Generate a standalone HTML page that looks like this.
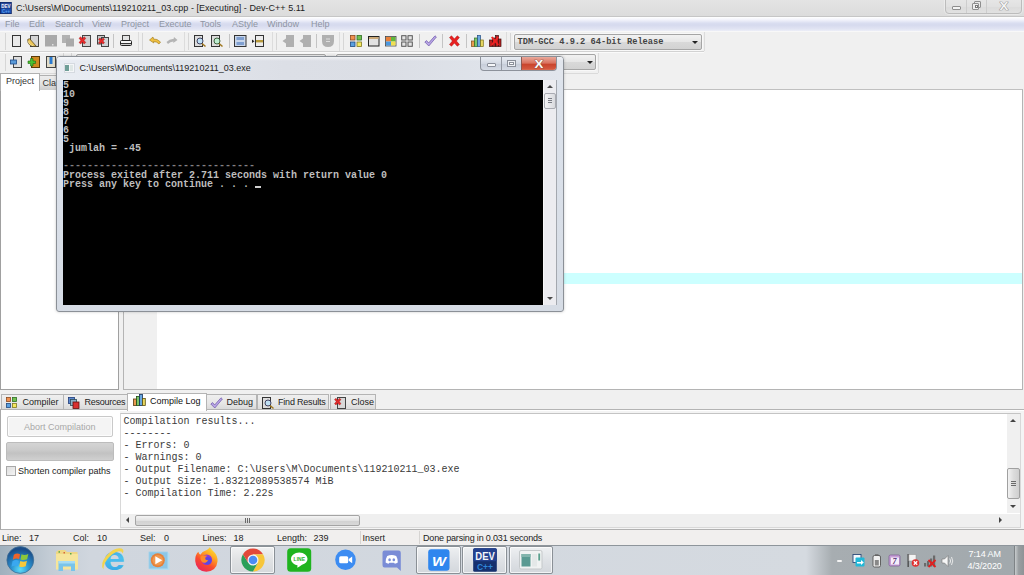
<!DOCTYPE html>
<html><head><meta charset="utf-8"><title>Dev-C++</title>
<style>
*{box-sizing:border-box;margin:0;padding:0}
html,body{width:1024px;height:575px;overflow:hidden;background:#f0f0f0}
body{position:relative;font-family:"Liberation Sans",sans-serif;font-size:9px;color:#1c1c1c}
.a{position:absolute}
.t{position:absolute;white-space:pre;line-height:11px}
#title{left:0;top:0;width:1024px;height:17px;background:linear-gradient(#e4e4e4,#dcdcdc);border-bottom:1px solid #c6c6c6}
#menu{left:0;top:17px;width:1024px;height:14px;background:linear-gradient(#ffffff 0%,#f2f3fb 20%,#d9ddf0 45%,#d6daee 58%,#e1e4f3 85%,#eceef7 100%)}
#menu span{position:absolute;top:2px;color:#8e95a3;line-height:11px}
#tools{left:0;top:31px;width:1024px;height:58px;background:#f0f0f0}
.mono{font-family:"Liberation Mono",monospace}
svg{position:absolute;overflow:visible}
.sep{position:absolute;width:1px;background:#c4c4c4}
.grip{position:absolute;width:1px;background:#d6d6d6}
.combo{position:absolute;border:1px solid #a5a5a5;border-radius:2px;background:linear-gradient(#f2f2f2,#e6e6e6 50%,#d9d9d9 51%,#d2d2d2);box-shadow:0 0 0 1px #f8f8f8}
.arr{position:absolute;border:3px solid transparent;border-bottom:none;border-top:3px solid #222}
</style></head><body>
<div id="title" class="a"></div>
<!-- app icon -->
<svg style="left:0;top:2px" width="12" height="12" viewBox="0 0 12 12"><rect x="0" y="0" width="11.800" height="12" fill="#10286a"/><rect x=".8" y=".8" width="10.200" height="5.500" fill="#2a4a9a"/><rect x=".8" y="6.500" width="10.200" height="4.700" fill="#1c4fb0"/><text x="1.300" y="5.600" font-family="Liberation Sans, sans-serif" font-size="5" font-weight="bold" fill="#f0f4fa" textLength="9.200" lengthAdjust="spacingAndGlyphs">DEV</text><text x="2" y="10.600" font-family="Liberation Sans, sans-serif" font-size="4.500" font-weight="bold" fill="#5aa0ea" textLength="8" lengthAdjust="spacingAndGlyphs">C++</text></svg>
<div class="t" style="left:16px;top:3px;font-size:9px;letter-spacing:.03px">C:\Users\M\Documents\119210211_03.cpp - [Executing] - Dev-C++ 5.11</div>
<!-- main window buttons -->
<div class="a" style="left:945px;top:-1px;width:77px;height:15px;border:1px solid #bcbcbc;border-radius:0 0 4px 4px;background:linear-gradient(#e6e6e6,#e1e1e1 50%,#dbdbdb 51%,#e1e1e1);overflow:hidden;box-shadow:0 0 0 1px rgba(255,255,255,.35)">
 <div class="a" style="left:20px;top:0;width:1px;height:15px;background:#cdcdcd"></div>
 <div class="a" style="left:40px;top:0;width:1px;height:15px;background:#cdcdcd"></div>
 <div class="a" style="left:6px;top:5.500px;width:9px;height:4px;border:1px solid #8e8e8e;border-radius:1px;background:#f4f4f4"></div>
 <div class="a" style="left:27.500px;top:1px;width:7px;height:7px;border:1px solid #8e8e8e;border-radius:1px;background:#e8e8e8"></div>
 <div class="a" style="left:26px;top:2.500px;width:7px;height:7px;border:1px solid #8e8e8e;border-radius:1px;background:#ededed"></div>
 <div class="a" style="left:28.500px;top:4.500px;width:3px;height:3.500px;border:1px solid #777;background:#fff"></div>
 <svg style="left:53px;top:1.500px" width="10" height="9" viewBox="0 0 10 9"><text x=".6" y="7.900" font-family="Liberation Sans, sans-serif" font-size="10" font-weight="bold" fill="#f4f4f4" stroke="#868686" stroke-width=".7" paint-order="stroke" textLength="8.800" lengthAdjust="spacingAndGlyphs">X</text></svg>
</div>
<div id="menu" class="a">
<span style="left:5px">File</span><span style="left:29px">Edit</span><span style="left:55px">Search</span><span style="left:92px">View</span><span style="left:121px">Project</span><span style="left:159px">Execute</span><span style="left:200px">Tools</span><span style="left:232px">AStyle</span><span style="left:267px">Window</span><span style="left:311px">Help</span>
</div>
<div id="tools" class="a"></div>

<svg style="left:12px;top:35px" width="12" height="12" viewBox="0 0 12 12"><rect x="0.5" y="0.5" width="8" height="11" fill="#e9e9e9" stroke="#333"/></svg>
<svg style="left:28px;top:35px" width="12" height="12" viewBox="0 0 12 12"><rect x="2.5" y="0.5" width="8" height="11" fill="#d5d5d5" stroke="#444"/><path d="M-.3 4.500 Q-.8 11.800 8.300 11.300 L1.600 3.700 Z" fill="#efc85a" stroke="#4a3a10" stroke-width=".7"/><path d="M.6 6 Q.8 10.300 5.500 10.700" fill="none" stroke="#fbe9a0" stroke-width=".8"/></svg>
<svg style="left:45px;top:35px" width="12" height="12" viewBox="0 0 12 12"><rect x="0" y="0" width="12" height="11.5" fill="#a9a9a9"/><rect x="7" y="9" width="1.5" height="1.5" fill="#e0e0e0"/></svg>
<svg style="left:62px;top:35px" width="12" height="12" viewBox="0 0 12 12"><rect x="0" y="0" width="8" height="8" fill="#b2b2b2"/><rect x="4" y="3.5" width="8" height="8" fill="#a9a9a9"/></svg>
<svg style="left:79px;top:35px" width="12" height="12" viewBox="0 0 12 12"><rect x="3.5" y="0.5" width="8" height="11" fill="#d0d0d0" stroke="#444"/><path d="M0 3.300 L1.700 1.800 L3.400 3.700 L5.100 1.800 L6.800 3.300 L5 5.400 L6.800 7.500 L5.100 9 L3.400 7.100 L1.700 9 L0 7.500 L1.800 5.400 Z" fill="#e62a2a" stroke="#a01010" stroke-width=".4"/></svg>
<svg style="left:97px;top:35px" width="12" height="12" viewBox="0 0 12 12"><rect x="0.5" y="0.5" width="7" height="8.5" fill="#c8c8c8" stroke="#444"/><rect x="4.5" y="2.5" width="7" height="9" fill="#cfd3d6" stroke="#444"/><path d="M1.500 4.200 L3 3 L4.500 4.600 L6 3 L7.500 4.200 L6 6 L7.500 7.800 L6 9 L4.500 7.400 L3 9 L1.500 7.800 L3 6 Z" fill="#e62a2a" stroke="#a01010" stroke-width=".4"/></svg>
<svg style="left:120px;top:35px" width="12" height="12" viewBox="0 0 12 12"><rect x="2.5" y="0.5" width="7" height="5" fill="#e4e4e4" stroke="#444"/><rect x="0.5" y="5.5" width="11" height="5" rx="1" fill="#f4f4f4" stroke="#222"/><rect x="1" y="8" width="10" height="1.2" fill="#333"/></svg>
<svg style="left:149px;top:35px" width="12" height="12" viewBox="0 0 12 12"><path d="M0.5 5 L4 2 L4.5 4 Q8 3.5 11.5 7 L10 9 Q8 6.5 4.6 6.5 L4.8 8 Z" fill="#f0c040" stroke="#9a7414" stroke-width=".6"/></svg>
<svg style="left:166px;top:35px" width="12" height="12" viewBox="0 0 12 12"><path d="M11.5 5 L8 2 L7.5 4 Q4 3.5 0.5 7 L2 9 Q4 6.5 7.4 6.5 L7.2 8 Z" fill="#b4b4b4"/></svg>
<svg style="left:194px;top:35px" width="12" height="12" viewBox="0 0 12 12"><rect x="0.5" y="0.5" width="8" height="11" fill="#dcdcdc" stroke="#333"/><circle cx="6" cy="6" r="3" fill="#bfe0f4" stroke="#335" stroke-width=".9"/><path d="M8 8.5 L11.5 11.5" stroke="#a07820" stroke-width="1.6"/></svg>
<svg style="left:211px;top:35px" width="12" height="12" viewBox="0 0 12 12"><rect x="0.5" y="0.5" width="8" height="11" fill="#dcdcdc" stroke="#333"/><circle cx="6" cy="6" r="3" fill="#bfeed0" stroke="#353" stroke-width=".9"/><path d="M8 8.5 L11.5 11.5" stroke="#a07820" stroke-width="1.6"/></svg>
<svg style="left:234px;top:35px" width="12" height="12" viewBox="0 0 12 12"><rect x="0.5" y="0.5" width="11.5" height="11" fill="#c9d6ea" stroke="#333"/><rect x="2.5" y="2" width="7.5" height="3" fill="#7f9fd0"/><rect x="2.5" y="7" width="7.5" height="3" fill="#7f9fd0"/></svg>
<svg style="left:252px;top:35px" width="12" height="12" viewBox="0 0 12 12"><rect x="3.5" y="0.5" width="8" height="11" fill="#ececec" stroke="#333"/><rect x="4" y="5" width="7" height="2.4" fill="#b89a3a"/><path d="M0 4.5 L2.5 6.2 L0 8 Z" fill="#222"/></svg>
<svg style="left:282px;top:35px" width="12" height="12" viewBox="0 0 12 12"><path d="M4 0 H12 V12 H4 V8.5 L0.5 6 L4 3.5 Z" fill="#b0b0b0"/></svg>
<svg style="left:299px;top:35px" width="12" height="12" viewBox="0 0 12 12"><path d="M4 0 H12 V12 H4 V8.5 L0.5 6 L4 3.5 Z" fill="#b0b0b0"/></svg>
<svg style="left:322px;top:35px" width="12" height="12" viewBox="0 0 12 12"><path d="M0 0 H12 V6 Q12 12 6 12 Q0 12 0 6 Z" fill="#b0b0b0"/><rect x="4" y="3.5" width="4" height="1" fill="#ddd"/><rect x="4" y="6" width="4" height="1" fill="#ddd"/></svg>
<svg style="left:350px;top:35px" width="12" height="12" viewBox="0 0 12 12"><rect x=".5" y=".5" width="4.5" height="4.5" fill="#f09050" stroke="#8a4a20" stroke-width=".8"/><rect x="7" y=".5" width="4.5" height="4.5" fill="#6fc050" stroke="#2e6e22" stroke-width=".8"/><rect x=".5" y="7" width="4.5" height="4.5" fill="#5aa0e0" stroke="#204a80" stroke-width=".8"/><rect x="7" y="7" width="4.5" height="4.5" fill="#f4e860" stroke="#807820" stroke-width=".8"/></svg>
<svg style="left:368px;top:35px" width="12" height="12" viewBox="0 0 12 12"><rect x=".5" y="1.5" width="10.5" height="9.5" fill="#e2e2e2" stroke="#222" stroke-width="1"/><rect x="1" y="2" width="9.5" height="2" fill="#caa878"/></svg>
<svg style="left:385px;top:35px" width="12" height="12" viewBox="0 0 12 12"><rect x=".5" y="1.5" width="10.5" height="9.5" fill="#e2e2e2" stroke="#444" stroke-width=".8"/><rect x="1" y="2" width="5" height="4.5" fill="#e8803a"/><rect x="6" y="2" width="4.5" height="4.5" fill="#62b83a"/><rect x="1" y="6.5" width="5" height="4" fill="#4a98e0"/><rect x="6" y="6.5" width="4.5" height="4" fill="#f0e050"/></svg>
<svg style="left:401px;top:35px" width="12" height="12" viewBox="0 0 12 12"><rect x=".7" y=".7" width="4.3" height="4.3" fill="#e4e4e4" stroke="#555" stroke-width="1"/><rect x="7" y=".7" width="4.3" height="4.3" fill="#e4e4e4" stroke="#555" stroke-width="1"/><rect x=".7" y="7" width="4.3" height="4.3" fill="#e4e4e4" stroke="#555" stroke-width="1"/><rect x="7" y="7" width="4.3" height="4.3" fill="#e4e4e4" stroke="#555" stroke-width="1"/></svg>
<svg style="left:424px;top:35px" width="12" height="12" viewBox="0 0 12 12"><path d="M0.8 7 L2.6 5.6 L4.6 8 L11 0.8 L12.4 2 L4.8 11 Z" fill="#b9a6e6" stroke="#6a55a8" stroke-width=".7"/></svg>
<svg style="left:449px;top:35px" width="12" height="12" viewBox="0 0 12 12"><path d="M0.5 2.5 L2.5 0.8 L5.4 4 L8.3 0.8 L10.4 2.5 L7.4 6 L10.4 9.5 L8.3 11.2 L5.4 8 L2.5 11.2 L0.5 9.5 L3.4 6 Z" fill="#e82020" stroke="#a80f0f" stroke-width=".5"/></svg>
<svg style="left:471px;top:35px" width="12" height="12" viewBox="0 0 12 12"><rect x=".5" y="6" width="3" height="5.5" fill="#e89a50" stroke="#7a4a18" stroke-width=".7"/><rect x="3.5" y="3" width="3" height="8.5" fill="#7ac46a" stroke="#2e6e22" stroke-width=".7"/><rect x="6.5" y=".5" width="3" height="11" fill="#6aa8e0" stroke="#224a80" stroke-width=".7"/><rect x="9.5" y="5" width="2.8" height="6.5" fill="#e8d860" stroke="#7a7018" stroke-width=".7"/></svg>
<svg style="left:489px;top:35px" width="12" height="12" viewBox="0 0 12 12"><rect x=".5" y="5" width="3" height="6.5" fill="#c02020" stroke="#3a1010" stroke-width=".7"/><rect x="3.5" y="3" width="3" height="8.5" fill="#a82020" stroke="#3a1010" stroke-width=".7"/><rect x="6.5" y=".5" width="3" height="11" fill="#b02020" stroke="#3a1010" stroke-width=".7"/><rect x="9.5" y="4" width="2.5" height="7.5" fill="#c02020" stroke="#3a1010" stroke-width=".7"/><path d="M2 2.5 L3.5 1.5 L6 4.5 L8.5 1.5 L10 2.5 L7.4 6 L10 9.5 L8.5 10.5 L6 7.5 L3.5 10.5 L2 9.500 L4.600 6 Z" fill="#ee2222"/></svg>
<div class="sep" style="left:113px;top:34px;height:14px"></div>
<div class="sep" style="left:229px;top:34px;height:14px"></div>
<div class="sep" style="left:316px;top:34px;height:14px"></div>
<div class="sep" style="left:418.5px;top:34px;height:14px"></div>
<div class="sep" style="left:442px;top:34px;height:14px"></div>
<div class="sep" style="left:465.5px;top:34px;height:14px"></div>
<div class="grip" style="left:4.5px;top:33px;height:17px"></div>
<div class="grip" style="left:142px;top:33px;height:17px"></div>
<div class="grip" style="left:187.5px;top:33px;height:17px"></div>
<div class="grip" style="left:275.5px;top:33px;height:17px"></div>
<div class="grip" style="left:343px;top:33px;height:17px"></div>
<div class="grip" style="left:509.5px;top:33px;height:17px"></div>
<div class="a" style="left:137.5px;top:32px;width:1px;height:19px;background:#dcdcdc"></div>
<div class="a" style="left:183.5px;top:32px;width:1px;height:19px;background:#dcdcdc"></div>
<div class="a" style="left:271.5px;top:32px;width:1px;height:19px;background:#dcdcdc"></div>
<div class="a" style="left:339px;top:32px;width:1px;height:19px;background:#dcdcdc"></div>
<div class="a" style="left:505.5px;top:32px;width:1px;height:19px;background:#dcdcdc"></div>
<div class="a" style="left:703.5px;top:32px;width:1px;height:19px;background:#dcdcdc"></div>
<div class="a" style="left:0;top:51px;width:704px;height:1px;background:#d2d2d2"></div>
<div class="a" style="left:0;top:52px;width:704px;height:1px;background:#fafafa"></div>
<div class="a" style="left:0;top:31px;width:1024px;height:1px;background:#f8f8f8"></div>
<div class="combo" style="left:514px;top:34px;width:188px;height:16px"></div>
<div class="t mono" style="left:517.5px;top:36.5px;font-size:8.7px;font-weight:bold;color:#444;line-height:11px">TDM-GCC 4.9.2 64-bit Release</div>
<div class="arr" style="left:692px;top:41px"></div>
<div class="combo" style="left:76px;top:54px;width:250px;height:16px"></div>
<div class="combo" style="left:336px;top:54px;width:260px;height:16px"></div>
<div class="arr" style="left:587px;top:60.500px"></div>
<div class="a" style="left:597.500px;top:53px;width:1px;height:20px;background:#dcdcdc"></div>
<div class="a" style="left:0;top:73px;width:598px;height:1px;background:#dadada"></div>
<svg style="left:10px;top:56px" width="12" height="12" viewBox="0 0 12 12"><rect x="3.5" y=".5" width="8" height="11" fill="#dedede" stroke="#444"/><rect x=".5" y="4" width="6" height="4" fill="#5a9ad8" stroke="#1e4a88" stroke-width=".8"/></svg>
<svg style="left:28px;top:56px" width="12" height="12" viewBox="0 0 12 12"><rect x="3.5" y=".5" width="8" height="11" fill="#d08a20" stroke="#5a3a08"/><path d="M0 5 H2.5 V2.500 H5 V5 H7.500 V7.500 H5 V10 H2.500 V7.500 H0 Z" fill="#4ac030" stroke="#1e6a10" stroke-width=".6"/></svg>
<svg style="left:46px;top:56px" width="12" height="12" viewBox="0 0 12 12"><rect x=".5" y=".5" width="9" height="11" fill="#e2dcc8" stroke="#444"/><rect x="3.5" y="1" width="3" height="7" fill="#2a7ad0"/></svg>
<div class="grip" style="left:4.5px;top:54px;height:17px"></div>
<div class="grip" style="left:63px;top:53px;height:4px"></div>
<div class="grip" style="left:71px;top:53px;height:4px"></div>

<!-- left panel -->
<div class="a" style="left:0;top:89px;width:119px;height:301px;background:#fff;border:1px solid #a0a0a0;border-top-color:#c8c8c8"></div>
<div class="a" style="left:0;top:73px;width:39.500px;height:18px;background:#fff;border:1px solid #b0b0b0;border-bottom:none"></div>
<div class="t" style="left:6px;top:76px;color:#333">Project</div>
<div class="a" style="left:39.500px;top:75px;width:30px;height:15px;background:linear-gradient(#ececec,#e2e2e2 55%,#cdcdcd);border:1px solid #b0b0b0;border-bottom:none;border-left:none"></div>
<div class="t" style="left:42.500px;top:78px;color:#333">Cla</div>

<!-- editor -->
<div class="a" style="left:123px;top:89.400px;width:899.500px;height:300.800px;background:#fff;border:1px solid #b4b4b4;border-top:1.300px solid #c0c0c0"></div>
<div class="a" style="left:124px;top:90px;width:33px;height:299px;background:#f0f0f0"></div>
<div class="a" style="left:157px;top:272.600px;width:865px;height:11.200px;background:#ccffff"></div>


<!-- console window -->
<div class="a" id="con" style="left:56px;top:56px;width:508px;height:256px;border:1px solid #8b9097;border-radius:4px 4px 3px 3px;background:linear-gradient(#eef1f6 0,#e4e9f0 10px,#dde3ec 24px,#d6dce5 100%);box-shadow:0 0 3px rgba(0,0,0,.22)"></div>
<div class="a" style="left:57px;top:57px;width:506px;height:23px;border-radius:3px 3px 0 0;background:linear-gradient(90deg,#e9edf3 0,#e2e6ed 20%,#dcdfe6 45%,#dbdee5 65%,#dfe3ea 85%,#e2e6ed 100%)"></div>
<div class="a" style="left:57px;top:57px;width:506px;height:4px;border-radius:3px 3px 0 0;background:linear-gradient(rgba(255,255,255,.6),rgba(255,255,255,0))"></div>
<div class="a" style="left:63px;top:80px;width:494px;height:225px;background:#000"></div>
<div class="a" style="left:543px;top:80px;width:14px;height:225px;background:#ececf0;border-left:1px solid #f8f8f8;border-right:1px solid #a4a8af"></div>
<div class="a" style="left:544px;top:93px;width:12px;height:16px;border:1px solid #a9abb2;border-radius:2px;background:linear-gradient(90deg,#f4f4f6,#d9dade)"></div>
<div class="a" style="left:548px;top:98px;width:4px;height:1px;background:#7a7d85;box-shadow:0 2px 0 #7a7d85,0 4px 0 #7a7d85"></div>
<div class="a" style="left:547px;top:85px;border:3px solid transparent;border-top:none;border-bottom:3px solid #4a4a4a"></div>
<div class="a" style="left:547px;top:297px;border:3px solid transparent;border-bottom:none;border-top:3px solid #4a4a4a"></div>
<!-- console icon + title -->
<div class="a" style="left:64px;top:63px;width:11px;height:10px;background:#f4f6f8;border:1px solid #d5dae0"></div>
<div class="a" style="left:65px;top:65px;width:4px;height:6px;background:#6f9e97"></div>
<div class="a" style="left:70px;top:65px;width:3px;height:6px;background:#dfe7e6"></div>
<div class="t" style="left:79.5px;top:62.5px;font-size:9px">C:\Users\M\Documents\119210211_03.exe</div>
<!-- console buttons -->
<div class="a" style="left:480px;top:57px;width:77px;height:14px;border:1px solid #8d929b;border-top:none;border-radius:0 0 4px 4px;background:linear-gradient(#e9edf3,#d3d9e3 50%,#c5ccd8 51%,#d5dbe5);overflow:hidden">
 <div class="a" style="left:20px;top:0;width:1px;height:14px;background:#9499a3"></div>
 <div class="a" style="left:40px;top:0;width:36px;height:14px;background:linear-gradient(#e9a99b,#d9705c 45%,#c8432b 50%,#d4583f 85%,#e08a6e);border-left:1px solid #8d5a52"></div>
 <div class="a" style="left:6px;top:6px;width:9px;height:4px;border:1px solid #8a8f99;border-radius:1px;background:#f6f7f9"></div>
 <div class="a" style="left:26px;top:3px;width:9px;height:7px;border:1px solid #8a8f99;background:#eef0f4"></div>
 <div class="a" style="left:28px;top:5px;width:5px;height:3px;border:1px solid #8a8f99;background:#fff"></div>
 <svg style="left:53px;top:2.500px" width="10" height="9" viewBox="0 0 10 9"><text x=".6" y="7.900" font-family="Liberation Sans, sans-serif" font-size="10" font-weight="bold" fill="#fbfbfb" stroke="#8a4a40" stroke-width=".7" paint-order="stroke" textLength="8.800" lengthAdjust="spacingAndGlyphs">X</text></svg>
</div>
<!-- console text -->
<pre class="a mono" style="left:63px;top:80.500px;font-size:10px;line-height:9px;color:#bebebe;font-weight:bold">5
10
9
8
7
6
5
 jumlah = -45

<span style="color:#808080;position:relative;top:-1px">--------------------------------</span>
Process exited after 2.711 seconds with return value 0
Press any key to continue . . . <span style="display:inline-block;width:6px;height:2px;background:#d0d0d0;vertical-align:-1px"></span></pre>


<!-- bottom panel -->
<div class="a" style="left:0;top:409.400px;width:1024px;height:120.600px;background:#fff;border-top:1px solid #b4b4b4;border-bottom:1px solid #b0b0b0;border-left:1px solid #a8a8a8"></div>
<div class="a" style="left:120px;top:411px;width:904px;height:118px;background:#f4f4f4"></div>
<div class="a" style="left:120px;top:413px;width:901px;height:115px;background:#fff;border:1px solid #d8d8d8;border-top-color:#c4c4c4"></div>
<!-- tabs -->
<div class="a" style="left:1px;top:394.400px;width:63px;height:15px;background:linear-gradient(#efefef,#e6e6e6 60%,#dadada);border:1px solid #b4b4b4;border-bottom:none"></div>
<div class="a" style="left:64px;top:394.400px;width:64px;height:15px;background:linear-gradient(#efefef,#e6e6e6 60%,#dadada);border:1px solid #b4b4b4;border-bottom:none;border-left:none"></div>
<div class="a" style="left:127px;top:393px;width:80px;height:18px;background:#fff;border:1px solid #b4b4b4;border-bottom:none"></div>
<div class="a" style="left:207px;top:394.400px;width:50px;height:15px;background:linear-gradient(#efefef,#e6e6e6 60%,#dadada);border:1px solid #b4b4b4;border-bottom:none;border-left:none"></div>
<div class="a" style="left:257px;top:394.400px;width:72px;height:15px;background:linear-gradient(#efefef,#e6e6e6 60%,#dadada);border:1px solid #b4b4b4;border-bottom:none"></div>
<div class="a" style="left:330px;top:394.400px;width:46px;height:15px;background:linear-gradient(#efefef,#e6e6e6 60%,#dadada);border:1px solid #b4b4b4;border-bottom:none"></div>
<div class="t" style="left:22.5px;top:397px;color:#222">Compiler</div>
<div class="t" style="left:84.5px;top:397px;color:#222;letter-spacing:-.25px">Resources</div>
<div class="t" style="left:150px;top:396px;color:#111">Compile Log</div>
<div class="t" style="left:226.5px;top:397px;color:#222">Debug</div>
<div class="t" style="left:278px;top:397px;color:#222;letter-spacing:-.2px">Find Results</div>
<div class="t" style="left:351px;top:397px;color:#222">Close</div>

<svg style="left:5.5px;top:397px" width="11" height="11" viewBox="0 0 11 11"><rect x=".5" y=".5" width="4" height="4" fill="#f09050" stroke="#8a4a20" stroke-width=".8"/><rect x="6.5" y=".5" width="4" height="4" fill="#6fc050" stroke="#2e6e22" stroke-width=".8"/><rect x=".5" y="6.500" width="4" height="4" fill="#5aa0e0" stroke="#204a80" stroke-width=".8"/><rect x="6.500" y="6.500" width="4" height="4" fill="#f4e860" stroke="#807820" stroke-width=".8"/></svg>
<svg style="left:68px;top:396.5px" width="12" height="12" viewBox="0 0 12 12"><rect x=".5" y=".5" width="6" height="6" fill="#5a8ad0" stroke="#1e3a78" stroke-width=".8"/><rect x="2.5" y="2.500" width="6" height="6" fill="#8ab0c8" stroke="#2e4a58" stroke-width=".8"/><rect x="5" y="5" width="6" height="6.500" fill="#d83030" stroke="#601010" stroke-width=".8"/></svg>
<svg style="left:133px;top:394px" width="13" height="12" viewBox="0 0 13 12"><rect x=".5" y="5" width="3" height="6.5" fill="#e89a50" stroke="#5a3a10" stroke-width=".8"/><rect x="3.5" y="2.500" width="3" height="9" fill="#7ac46a" stroke="#1e4e12" stroke-width=".8"/><rect x="6.500" y=".5" width="3" height="11" fill="#6aa8e0" stroke="#12305a" stroke-width=".8"/><rect x="9.500" y="4.500" width="2.800" height="7" fill="#e8d860" stroke="#5a5010" stroke-width=".8"/></svg>
<svg style="left:210px;top:397px" width="13" height="12" viewBox="0 0 13 12"><path d="M0.8 7 L2.6 5.6 L4.6 8 L11 0.8 L12.4 2 L4.8 11 Z" fill="#b9a6e6" stroke="#6a55a8" stroke-width=".7"/></svg>
<svg style="left:261.5px;top:396.5px" width="12" height="12" viewBox="0 0 12 12"><rect x="0.5" y="0.5" width="8" height="11" fill="#dcdcdc" stroke="#333"/><circle cx="6" cy="6" r="3" fill="#bfe0f4" stroke="#335" stroke-width=".9"/><path d="M8 8.5 L11.5 11.5" stroke="#a07820" stroke-width="1.6"/></svg>
<svg style="left:334px;top:396.5px" width="12" height="12" viewBox="0 0 12 12"><rect x="3.5" y="0.5" width="8" height="11" fill="#d8d8d8" stroke="#444"/><path d="M0.5 2.5 L2 1.3 L3.700 3.200 L5.400 1.300 L7 2.500 L5.300 4.600 L7 6.700 L5.400 8 L3.700 6 L2 8 L0.500 6.700 L2.200 4.600 Z" fill="#e02a2a" stroke="#a01010" stroke-width=".4"/></svg>

<!-- abort button etc -->
<div class="a" style="left:7px;top:416px;width:106px;height:21px;border:1px solid #c9c9c9;border-radius:2px;background:#f4f4f4;box-shadow:inset 0 0 0 1px #fcfcfc"></div>
<div class="t" style="left:24px;top:421.5px;color:#a8a8a8">Abort Compilation</div>
<div class="a" style="left:6px;top:442px;width:108px;height:19px;border:1px solid #bcbcbc;border-radius:2px;background:linear-gradient(#d4d4d4,#cbcbcb 40%,#c2c2c2 60%,#d0d0d0)"></div>
<div class="a" style="left:6px;top:466px;width:10px;height:10px;border:1px solid #a8a8a8;background:linear-gradient(135deg,#dedede,#f4f4f4)"></div>
<div class="t" style="left:18px;top:466px;color:#222">Shorten compiler paths</div>
<!-- log text -->
<pre class="a mono" style="left:123.5px;top:416.1px;font-size:10px;line-height:12px;color:#3a3a3a">Compilation results...
--------
- Errors: 0
- Warnings: 0
- Output Filename: C:\Users\M\Documents\119210211_03.exe
- Output Size: 1.83212089538574 MiB
- Compilation Time: 2.22s</pre>
<!-- log scrollbars -->
<div class="a" style="left:1006.5px;top:414px;width:13.500px;height:99px;background:#f0f0f0"></div>
<div class="a" style="left:121px;top:513.5px;width:899px;height:13.500px;background:#efefef"></div>
<div class="a" style="left:1007px;top:468px;width:12.5px;height:31px;border:1px solid #a0a0a0;border-radius:2px;background:linear-gradient(90deg,#f2f2f2,#dcdcdc 50%,#cfcfcf)"></div>
<div class="a" style="left:1011px;top:480.5px;width:5px;height:1px;background:#6a6a6a;box-shadow:0 2px 0 #6a6a6a,0 4px 0 #6a6a6a"></div>
<div class="a" style="left:1010px;top:419px;border:3px solid transparent;border-top:none;border-bottom:3px solid #444"></div>
<div class="a" style="left:1010px;top:505px;border:3px solid transparent;border-bottom:none;border-top:3px solid #444"></div>
<div class="a" style="left:999px;top:516.5px;border:3.500px solid transparent;border-right:none;border-left:3.500px solid #444"></div>
<div class="a" style="left:125.500px;top:516.500px;border:3.500px solid transparent;border-left:none;border-right:3.500px solid #444"></div>
<div class="a" style="left:135px;top:514.5px;width:225px;height:11.500px;border:1px solid #a4a4a4;border-radius:2px;background:linear-gradient(#f4f4f4,#e2e2e2 50%,#d2d2d2 55%,#d8d8d8)"></div>
<div class="a" style="left:245px;top:518px;width:1px;height:5px;background:#6a6a6a;box-shadow:2px 0 0 #6a6a6a,4px 0 0 #6a6a6a"></div>

<!-- status bar -->
<div class="a" style="left:0;top:530px;width:1024px;height:15px;background:#f1efee"></div>
<div class="t" style="left:2px;top:532.5px">Line:</div><div class="t" style="left:29px;top:532.5px">17</div>
<div class="t" style="left:73px;top:532.5px">Col:</div><div class="t" style="left:97px;top:532.5px">10</div>
<div class="t" style="left:140px;top:532.5px">Sel:</div><div class="t" style="left:164px;top:532.5px">0</div>
<div class="t" style="left:202.500px;top:532.5px">Lines:</div><div class="t" style="left:233.500px;top:532.5px">18</div>
<div class="t" style="left:277px;top:532.5px">Length:</div><div class="t" style="left:313.500px;top:532.5px">239</div>
<div class="t" style="left:362.500px;top:532.5px">Insert</div>
<div class="t" style="left:423px;top:532.5px;letter-spacing:-.17px">Done parsing in 0.031 seconds</div>
<div class="a" style="left:359.500px;top:531px;width:1px;height:13px;background:#d6d4d2"></div>
<div class="a" style="left:418.500px;top:531px;width:1px;height:13px;background:#d6d4d2"></div>

<!-- taskbar -->
<div class="a" id="taskbar" style="left:0;top:545px;width:1024px;height:30px;background:linear-gradient(90deg,#9fb0bd 0,#c3ccd5 50px,#d0d6de 90px,#d5dae0 806px,#a7adb1 832px,#a2a9ad 1010px);border-top:1px solid #8e959b"></div>

<svg style="left:6px;top:546px" width="29" height="29" viewBox="0 0 29 29"><defs><radialGradient id="orb" cx="50%" cy="85%" r="75%"><stop offset="0" stop-color="#5cdcf8"/><stop offset=".45" stop-color="#2a92d0"/><stop offset="1" stop-color="#1a4c88"/></radialGradient></defs><circle cx="14.3" cy="14" r="13.4" fill="url(#orb)" stroke="#3f6e96" stroke-width=".8"/><g transform="translate(14.300 14.300) scale(1.180) translate(-14 -14.200)"><path d="M8.5 9.5 Q11 7.500 13.800 9 L13 13.300 Q10.500 12 7.700 13.800 Z" fill="#f0642a"/><path d="M15 9 Q17.500 10.300 20.800 8.800 L19.800 13.300 Q17 14.600 14.200 13.500 Z" fill="#8cc63a"/><path d="M7.400 15 Q10 13.300 12.800 14.600 L12 19.300 Q9.500 18 6.500 19.600 Z" fill="#3aa8f0"/><path d="M14 14.800 Q16.800 16 19.600 14.600 L18.600 19.300 Q16 20.600 13.100 19.400 Z" fill="#f8c83a"/></g></svg>
<svg style="left:55px;top:549px" width="24" height="23" viewBox="0 0 24 23"><path d="M1 3 L3.500 1 H10 L12 3 H22.500 V20 H1 Z" fill="#efd784"/><rect x="1" y="5" width="22" height="15.500" fill="#f6e59a"/><rect x="3.5" y="2.200" width="1.500" height="1.500" fill="#5aa84a"/><rect x="8.500" y="3" width="1.500" height="1.500" fill="#d86a3a"/><rect x="15" y="4" width="1.500" height="1.500" fill="#5aa84a"/><path d="M3.500 12 H20 V22 H16 V17.500 H8 V22 H3.500 Z" fill="#79c4ea"/><path d="M3.500 12 H20 V14.500 H3.500 Z" fill="#a6dcf4"/></svg>
<svg style="left:100px;top:546px" width="27" height="27" viewBox="0 0 27 27"><defs><linearGradient id="ieg" x1="0" y1="0" x2="0" y2="1"><stop offset="0" stop-color="#2f8fd8"/><stop offset=".5" stop-color="#4cc0f0"/><stop offset="1" stop-color="#2f9fe0"/></linearGradient></defs><text x="3" y="23.500" font-family="Liberation Sans, sans-serif" font-size="33" font-weight="bold" fill="url(#ieg)" textLength="22" lengthAdjust="spacingAndGlyphs">e</text><path d="M3.500 23.500 Q-.5 18 6.500 9.500 Q14.500 1 21.500 2.500 Q24.500 3.500 22.800 7.500 Q22 4.800 18.500 5.300 Q12 7 6.800 14 Q3 19.500 3.500 23.500 Z" fill="#f2d44e"/></svg>
<svg style="left:148px;top:551px" width="23" height="20" viewBox="0 0 23 20"><path d="M1 1 H19.500 L21.500 2.500 V19 H3 L1 17.500 Z" fill="#b4dcf0"/><rect x="1" y="1" width="18.500" height="16.500" fill="#8cc6e6" stroke="#9fd2ec" stroke-width=".8"/><circle cx="9.800" cy="9.300" r="7" fill="#e5813a"/><circle cx="9.800" cy="9.300" r="5.300" fill="#f09a50"/><path d="M7.300 5.300 L14.300 9.300 L7.300 13.300 Z" fill="#fff"/></svg>
<svg style="left:194px;top:547px" width="25" height="26" viewBox="0 0 25 26"><defs><linearGradient id="ffg" x1="0.85" y1="0" x2="0.25" y2="1"><stop offset="0" stop-color="#ffe43a"/><stop offset=".3" stop-color="#ffae22"/><stop offset=".65" stop-color="#fa4a2c"/><stop offset="1" stop-color="#e8245e"/></linearGradient></defs><path d="M12.300 3.200 Q14.500 2.200 15.800 .3 Q17.800 3 20.300 5.200 Q24 9 23.500 14.500 Q22.500 24 12.300 24.800 Q2 24 1.200 14 Q1 8 4.300 4.800 Q4.800 6.800 6.300 7.800 Q8 4.500 12.300 3.200 Z" fill="url(#ffg)"/><circle cx="12.800" cy="12.800" r="5.300" fill="#8a3ad8"/><circle cx="13.800" cy="13.800" r="3.600" fill="#5a48e0"/><path d="M6.500 9.500 Q9.500 7.800 13.500 8.800 Q10.800 9.800 11.200 12 Q12 13.600 14.200 13 Q13 16 9.500 15.800 Q6 14.500 6.500 9.500 Z" fill="#ff8a28"/></svg>
<div class="a" style="left:230px;top:546px;width:44.500px;height:28px;border:1px solid #8a9096;border-radius:2px;background:linear-gradient(#f0f1f2,#e0e2e4 50%,#d6d9dc);box-shadow:inset 0 0 0 1px rgba(255,255,255,.7)"></div>
<svg style="left:240.500px;top:548px" width="24" height="24" viewBox="0 0 24 24"><path d="M12 12 L1.950 6.200 A11.600 11.600 0 0 1 22.050 6.200 L12 6.400 Z" fill="#e2493a"/><path d="M12 12 L22.050 6.200 A11.600 11.600 0 0 1 12 23.600 L16.800 14.800 Z" fill="#f7c63a"/><path d="M12 6.400 L22.050 6.200 L17 12 Z" fill="#f7c63a"/><path d="M12 12 L12 23.600 A11.600 11.600 0 0 1 1.950 6.200 L7.200 14.800 Z" fill="#2ba05a"/><path d="M12 23.600 L16.800 14.800 L12 17.600 L7.200 14.800 Z" fill="#2ba05a"/><path d="M1.950 6.200 L7.200 14.800 L7 9 L12 6.400 Z" fill="#e2493a"/><circle cx="12" cy="12" r="5.500" fill="#f4f4f4"/><circle cx="12" cy="12" r="4.300" fill="#4a8cf4"/></svg>
<svg style="left:287px;top:548px" width="25" height="24" viewBox="0 0 25 24"><rect x=".2" y=".2" width="24" height="23.500" rx="3.500" fill="#1fb41f"/><path d="M12.300 4.500 C7.500 4.500 4 7.500 4 11 C4 14 6.800 16.600 10.500 17.200 L10.300 19.800 Q12.500 19 15 16.800 C18.500 15.800 20.500 13.600 20.500 11 C20.500 7.500 17 4.500 12.300 4.500 Z" fill="#fff"/><text x="6.600" y="12.900" font-family="Liberation Sans, sans-serif" font-size="5.200" font-weight="bold" fill="#1fb41f" textLength="11.400" lengthAdjust="spacingAndGlyphs">LINE</text></svg>
<svg style="left:335px;top:549px" width="22" height="22" viewBox="0 0 22 22"><circle cx="10.500" cy="10.800" r="10.300" fill="#3c8cf2"/><rect x="4.200" y="7.300" width="9" height="7" rx="1.500" fill="#fff"/><path d="M13.700 10 L17.200 7.500 V14.200 L13.700 11.800 Z" fill="#fff"/></svg>
<svg style="left:382px;top:550px" width="20" height="22" viewBox="0 0 20 22"><path d="M2.500 0.500 H16.500 Q18.800 .5 18.800 2.800 V21 L15 17.500 H2.500 Q.5 17.500 .5 15.200 V2.800 Q.5 .5 2.500 .5 Z" fill="#7a8cd6"/><path d="M5.200 6 Q9.700 4 14.200 6 Q16 9 15.800 12.500 Q14.500 13.500 12.800 13.800 L12.200 12.800 Q7.500 12.800 7.200 12.800 L6.600 13.800 Q5 13.500 3.600 12.500 Q3.400 9 5.200 6 Z" fill="#fff"/><ellipse cx="7.600" cy="9.800" rx="1.300" ry="1.500" fill="#7a8cd6"/><ellipse cx="11.800" cy="9.800" rx="1.300" ry="1.500" fill="#7a8cd6"/></svg>
<div class="a" style="left:416px;top:546px;width:44.500px;height:28px;border:1px solid #8a9096;border-radius:2px;background:linear-gradient(#eef0f2,#dfe2e6 50%,#d3d7dc);box-shadow:inset 0 0 0 1px rgba(255,255,255,.7)"></div>
<div class="a" style="left:462px;top:546px;width:44.500px;height:28px;border:1px solid #8a9096;border-radius:2px;background:linear-gradient(#eef0f2,#dfe2e6 50%,#d3d7dc);box-shadow:inset 0 0 0 1px rgba(255,255,255,.7)"></div>
<div class="a" style="left:508.8px;top:546px;width:44.500px;height:28px;border:1px solid #8a9096;border-radius:2px;background:linear-gradient(#eef0f2,#dfe2e6 50%,#d3d7dc);box-shadow:inset 0 0 0 1px rgba(255,255,255,.7)"></div>
<svg style="left:428px;top:549px" width="22" height="22" viewBox="0 0 22 22"><rect x=".2" y=".2" width="21.300" height="21.600" rx="3" fill="#2f86ee"/><text x="4" y="16.500" font-family="Liberation Sans, sans-serif" font-size="13" font-weight="bold" font-style="italic" fill="#fff" textLength="14" lengthAdjust="spacingAndGlyphs">W</text></svg>
<svg style="left:473px;top:548px" width="24" height="24" viewBox="0 0 24 24"><rect x=".2" y=".2" width="23.600" height="23.600" rx="1.500" fill="#15306e"/><rect x=".2" y=".2" width="23.600" height="13" rx="1.500" fill="#24418e"/><text x="2.300" y="11.800" font-family="Liberation Sans, sans-serif" font-size="11" font-weight="bold" fill="#f4f6fa" textLength="19.500" lengthAdjust="spacingAndGlyphs">DEV</text><text x="4" y="21.500" font-family="Liberation Sans, sans-serif" font-size="9" font-weight="bold" fill="#2f86d8" textLength="16" lengthAdjust="spacingAndGlyphs">C++</text></svg>
<svg style="left:519px;top:550px" width="24" height="20" viewBox="0 0 24 20"><rect x=".5" y=".5" width="22.500" height="18.500" rx="1.500" fill="#f0f2f2" stroke="#c4c8ca"/><rect x="2.500" y="4" width="9" height="12.500" fill="#5a9a92"/><rect x="2.500" y="4" width="9" height="3" fill="#82b4ac"/><rect x="13" y="4" width="5" height="12.500" fill="#e4e8e8"/><rect x="19.300" y="3.500" width="1.800" height="7" fill="#5aa08e"/></svg>
<div class="a" style="left:836.500px;top:560px;width:5px;height:2px;background:#f4f4f4;border-radius:1px"></div>
<svg style="left:852px;top:554px" width="14" height="14" viewBox="0 0 14 14"><rect x="1" y=".5" width="8" height="8" fill="#f4f8fc" stroke="#2a4a7a" stroke-width=".9"/><rect x="3.500" y="3.500" width="9" height="9" rx="1" fill="#22b8d8"/><path d="M5 8 H9 V6 L11.800 8.500 L9 11 V9.500 H5 Z" fill="#fff"/></svg>
<svg style="left:872px;top:554px" width="10" height="14" viewBox="0 0 10 14"><rect x="1" y="1.500" width="7.500" height="11.500" rx="1.500" fill="#f0f0f0" stroke="#555" stroke-width=".9"/><rect x="3" y=".3" width="3.500" height="1.500" fill="#666"/><rect x="2.800" y="6" width="4" height="5.500" fill="#888"/></svg>
<svg style="left:888px;top:554px" width="14" height="14" viewBox="0 0 14 14"><rect x="1" y="1" width="11" height="11" rx="1.500" fill="#c8a0d8" stroke="#7a5a92" stroke-width=".7"/><rect x="3" y="3.500" width="8" height="7" fill="#f6eefa"/><text x="4.500" y="10.300" font-family="Liberation Serif, serif" font-size="8" font-style="italic" font-weight="bold" fill="#4a2a6a">7</text></svg>
<svg style="left:906px;top:553px" width="14" height="15" viewBox="0 0 14 15"><rect x="1.500" y="1" width="1.300" height="13" fill="#444"/><path d="M2.800 1.500 H10 V8 H2.800 Z" fill="#f4f4f4" stroke="#888" stroke-width=".5"/><circle cx="9.500" cy="10" r="3.800" fill="#e03030"/><path d="M7.800 8.300 L11.200 11.700 M11.200 8.300 L7.800 11.700" stroke="#fff" stroke-width="1.300"/></svg>
<svg style="left:923px;top:554px" width="14" height="14" viewBox="0 0 14 14"><rect x="1" y="9" width="2.200" height="3.500" fill="#6a6a6a"/><rect x="4" y="7" width="2.200" height="5.500" fill="#6a6a6a"/><rect x="7" y="4.500" width="2.200" height="8" fill="#6a6a6a"/><rect x="10" y="1.500" width="2.200" height="11" fill="#6a6a6a"/><path d="M5.500 6 L12.500 13 M12.500 6 L5.500 13" stroke="#e02020" stroke-width="1.800"/></svg>
<svg style="left:941px;top:554px" width="14" height="14" viewBox="0 0 14 14"><path d="M1 5 H3.500 L7 1.500 V12.500 L3.500 9 H1 Z" fill="#f6f6f6" stroke="#777" stroke-width=".6"/><path d="M8.800 4.500 Q10.500 7 8.800 9.500 M10.500 3 Q13 7 10.500 11" fill="none" stroke="#eee" stroke-width=".9"/></svg>
<div class="t" style="left:968.500px;top:548.500px;color:#fff;font-size:9px;letter-spacing:-.1px">7:14 AM</div>
<div class="t" style="left:967.500px;top:560.500px;color:#fff;font-size:9px;letter-spacing:-.1px">4/3/2020</div>
<div class="a" style="left:1013.500px;top:546px;width:10.500px;height:29px;background:linear-gradient(90deg,#c8ccce,#9a9fa2 40%,#8e9396);border-left:1px solid #7e8386"></div>
</body></html>
